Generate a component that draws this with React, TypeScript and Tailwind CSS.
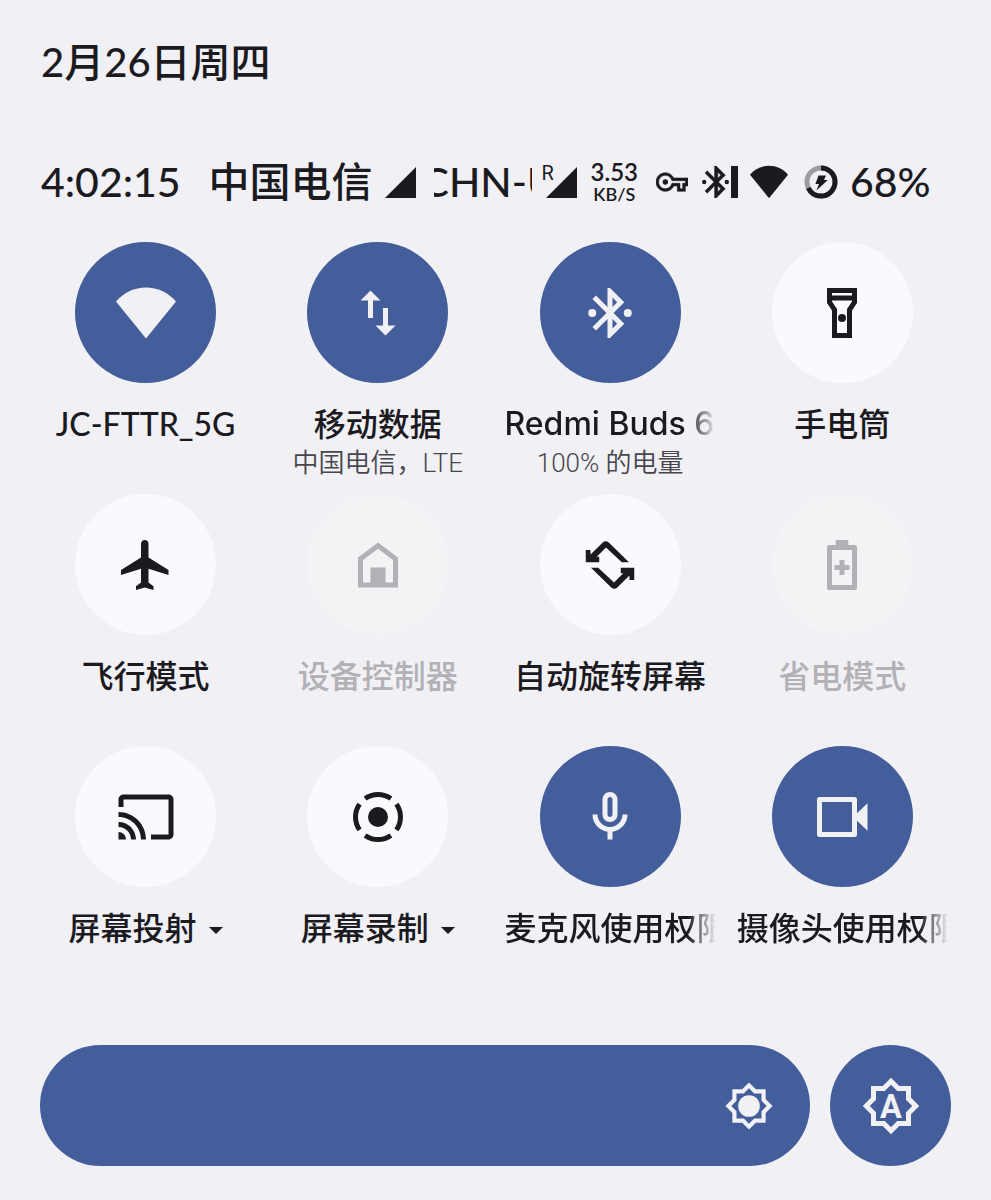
import type { ReactNode } from 'react';

function Icon({ className = 'size-[60px]', children }: { className?: string; children: ReactNode }) {
  return (
    <svg viewBox="0 0 24 24" fill="currentColor" fillRule="evenodd" aria-hidden="true" className={`shrink-0 ${className}`}>
      {children}
    </svg>
  );
}

const BLUETOOTH =
  'M17.71 7.71L12 2h-1v7.59L6.41 5 5 6.41 10.59 12 5 17.59 6.41 19 11 14.41V22h1l5.71-5.71-4.3-4.29zM13 5.83l1.88 1.88L13 9.59zM14.88 16.29L13 18.17v-3.76z';
const WIFI = 'M12 22.2L0 7.4C3.2 3.7 7.4 1.8 12 1.8S20.8 3.7 24 7.4z';
const STAR =
  'M20 8.69V4h-4.69L12 .69 8.69 4H4v4.69L.69 12 4 15.31V20h4.69L12 23.31 15.31 20H20v-4.69L23.31 12zM18 14.48V18h-3.52L12 20.48 9.52 18H6v-3.52L3.52 12 6 9.52V6h3.52L12 3.52 14.48 6H18v3.52L20.48 12z';
const ROTATE_ARROW = 'M2.3 6h1.9v1.8l4.9-4.8c.7-.7 1.7-.7 2.4 0l8.1 7.9h-2.9L10.4 5 6.7 8.7h1V10.9H2.3z';

type State = 'on' | 'off' | 'disabled';

interface Tile {
  label: string;
  sub?: string;
  state: State;
  icon: ReactNode;
  menu?: boolean;
  overflow?: boolean;
  font?: string;
}

const tiles: Tile[] = [
  { label: 'JC-FTTR_5G', state: 'on', icon: <path d={WIFI} /> },
  {
    label: '移动数据',
    sub: '中国电信，LTE',
    state: 'on',
    icon: <path d="M16 17v-7h-2v7h-3l4 4 4-4zM9 3L5 7h3v7h2V7h3z" />,
  },
  {
    label: 'Redmi Buds 6',
    sub: '100% 的电量',
    state: 'on',
    overflow: true,
    font: "font-['Inter',sans-serif]",
    icon: (
      <>
        <path d={BLUETOOTH} />
        <circle cx="4.9" cy="12" r="1.6" />
        <circle cx="19.1" cy="12" r="1.6" />
      </>
    ),
  },
  {
    label: '手电筒',
    state: 'off',
    icon: (
      <>
        <path d="M18 2H6v6l2 3v11h8V11l2-3zM16 4v1H8V4zM14 10.4V20h-4v-9.6l-2-3V7h8v.4z" />
        <circle cx="12" cy="14" r="1.6" />
      </>
    ),
  },
  {
    label: '飞行模式',
    state: 'off',
    icon: (
      <path d="M21 16v-2l-8-5V3.5c0-.83-.67-1.5-1.5-1.5S10 2.67 10 3.5V9l-8 5v2l8-2.5V19l-2 1.5V22l3.5-1 3.5 1v-1.5L13 19v-5.5z" />
    ),
  },
  {
    label: '设备控制器',
    state: 'disabled',
    icon: (
      <>
        <path d="M12 3L4 9v12h16V9zM18 19H6v-9l6-4.5 6 4.5z" />
        <path d="M9 13h6v7H9z" />
      </>
    ),
  },
  {
    label: '自动旋转屏幕',
    state: 'off',
    icon: (
      <>
        <path d={ROTATE_ARROW} />
        <path d={ROTATE_ARROW} transform="rotate(180 12 12)" />
      </>
    ),
  },
  {
    label: '省电模式',
    state: 'disabled',
    icon: (
      <>
        <path d="M17 4h-2.5V2h-5v2H7a1 1 0 0 0-1 1v16a1 1 0 0 0 1 1h10a1 1 0 0 0 1-1V5a1 1 0 0 0-1-1zM16 20H8V6h8z" />
        <path d="M11 10h2v2h2v2h-2v2h-2v-2H9v-2h2z" />
      </>
    ),
  },
  {
    label: '屏幕投射',
    state: 'off',
    menu: true,
    icon: (
      <path d="M21 3H3c-1.1 0-2 .9-2 2v3h2V5h18v14h-7v2h7c1.1 0 2-.9 2-2V5c0-1.1-.9-2-2-2zM1 18v3h3c0-1.66-1.34-3-3-3zm0-4v2c2.76 0 5 2.24 5 5h2c0-3.87-3.13-7-7-7zm0-4v2c4.97 0 9 4.03 9 9h2c0-6.08-4.93-11-11-11z" />
    ),
  },
  {
    label: '屏幕录制',
    state: 'off',
    menu: true,
    icon: (
      <>
        <circle cx="12" cy="12" r="4" />
        <path
          fill="none"
          stroke="currentColor"
          strokeWidth="2"
          d="M6.84 4.63a9 9 0 0 1 10.32 0M19.37 6.84a9 9 0 0 1 0 10.32M17.16 19.37a9 9 0 0 1-10.32 0M4.63 17.16a9 9 0 0 1 0-10.32"
        />
      </>
    ),
  },
  {
    label: '麦克风使用权限',
    state: 'on',
    overflow: true,
    icon: (
      <path d="M12 14c1.66 0 3-1.34 3-3V5c0-1.66-1.34-3-3-3S9 3.34 9 5v6c0 1.66 1.34 3 3 3zm-1-9c0-.55.45-1 1-1s1 .45 1 1v6c0 .55-.45 1-1 1s-1-.45-1-1zm6 6c0 2.76-2.24 5-5 5s-5-2.24-5-5H5c0 3.53 2.61 6.43 6 6.92V21h2v-3.08c3.39-.49 6-3.39 6-6.92z" />
    ),
  },
  {
    label: '摄像头使用权限',
    state: 'on',
    overflow: true,
    icon: (
      <>
        <path d="M17 4H3a1 1 0 0 0-1 1v14a1 1 0 0 0 1 1h14a1 1 0 0 0 1-1V5a1 1 0 0 0-1-1zM16 18H4V6h12z" />
        <path d="M17.9 10.6l4.3-4.1v11l-4.3-4.1z" />
      </>
    ),
  },
];

const circleStyle: Record<State, string> = {
  on: 'bg-[#435e9a] text-[#f1f0f5]',
  off: 'bg-[#faf9fe] text-[#1b1b1f]',
  disabled: 'bg-[#f3f2f5] text-[#b2b1b5]',
};

function TileButton({ tile }: { tile: Tile }) {
  return (
    <button
      type="button"
      aria-pressed={tile.state === 'on'}
      disabled={tile.state === 'disabled'}
      className="flex min-w-0 flex-col items-center"
    >
      <span className={`flex size-[141px] items-center justify-center rounded-full ${circleStyle[tile.state]}`}>
        <Icon>{tile.icon}</Icon>
      </span>
      <span
        className={`mt-[21px] flex w-full items-center overflow-hidden text-[32px] leading-10 font-medium whitespace-nowrap ${
          tile.overflow
            ? 'justify-start [mask-image:linear-gradient(to_right,black_calc(100%-28px),transparent)]'
            : 'justify-center'
        } ${tile.state === 'disabled' ? 'text-[#b2b1b5]' : 'text-[#1b1b1f]'} ${tile.font ?? ''}`}
      >
        {tile.label}
        {tile.menu && (
          <svg viewBox="0 0 14 7" fill="currentColor" aria-hidden="true" className="mt-1 ml-3 h-[7px] w-[14px] shrink-0">
            <path d="M0 0h14L7 7z" />
          </svg>
        )}
      </span>
      {tile.sub && (
        <span className="font-['Roboto','Noto_Sans_CJK_SC',sans-serif] text-[26px] leading-[38px] font-[350] whitespace-nowrap text-[#46464c]">
          {tile.sub}
        </span>
      )}
    </button>
  );
}

function Signal() {
  return (
    <svg viewBox="0 0 31 31" fill="currentColor" aria-hidden="true" className="size-[31px] shrink-0">
      <path d="M31 0v31H0z" />
    </svg>
  );
}

function StatusBar() {
  return (
    <div className="flex h-14 items-center text-[41px] leading-[56px] font-medium whitespace-nowrap">
      <time>4:02:15</time>
      <span className="ml-7">中国电信</span>
      <span className="ml-3">
        <Signal />
      </span>
      <span className="ml-[18px] flex w-[98px] overflow-hidden">
        <span className="-ml-3">CHN-U</span>
      </span>
      <span className="relative ml-[14px]">
        <Signal />
        <span className="absolute -top-1 -left-1 font-['Roboto'] text-xl leading-5 font-normal">R</span>
      </span>
      <span className="ml-[14px] flex flex-col items-center font-semibold">
        <span className="text-2xl leading-6">3.53</span>
        <span className="text-lg leading-5">KB/S</span>
      </span>
      <Icon className="ml-[18px] size-8">
        <path
          stroke="currentColor"
          strokeWidth=".4"
          d="M22 19h-6v-4h-2.68c-1.14 2.42-3.6 4-6.32 4-3.86 0-7-3.14-7-7s3.14-7 7-7c2.72 0 5.17 1.58 6.32 4H24v6h-2zM18 17h2v-4h2v-2H11.94l-.23-.67C11.01 8.34 9.11 7 7 7c-2.76 0-5 2.24-5 5s2.24 5 5 5c2.11 0 4.01-1.34 4.71-3.33l.23-.67H18z"
        />
        <circle cx="7" cy="12" r="2" />
      </Icon>
      <svg viewBox="0 0 36 32" fill="currentColor" fillRule="evenodd" aria-hidden="true" className="ml-[14px] h-8 w-9 shrink-0">
        <path d={BLUETOOTH} stroke="currentColor" strokeWidth=".3" transform="translate(-5 -3.2) scale(1.6)" />
        <circle cx="2.2" cy="16" r="2.2" />
        <circle cx="24.8" cy="16" r="2.2" />
        <path d="M29 0h7v32h-7z" />
      </svg>
      <Icon className="ml-3 size-[38px]">
        <path d={WIFI} />
      </Icon>
      <svg viewBox="0 0 34 34" aria-hidden="true" className="ml-4 size-[34px] shrink-0">
        <circle cx="17" cy="17" r="14" fill="none" stroke="#9c9b9f" strokeWidth="5" />
        <circle
          cx="17"
          cy="17"
          r="14"
          fill="none"
          stroke="#1b1b1f"
          strokeWidth="5"
          pathLength="100"
          strokeDasharray="68 32"
          transform="rotate(-90 17 17)"
        />
        <path d="M14.5 10.5h7.5l-2 4.5h3.8L12.4 25.5l2.6-6.5h-3.6z" fill="#1b1b1f" />
      </svg>
      <span className="ml-3">68%</span>
    </div>
  );
}

export default function App() {
  return (
    <main
      lang="zh-CN"
      className="min-h-screen bg-[#f1f0f5] pt-9 pb-[34px] font-['Lato','Noto_Sans_CJK_SC',sans-serif] text-[#1b1b1f]"
    >
      <header className="px-[41px]">
        <h1 className="text-[40px] leading-[52px] font-medium">2月26日周四</h1>
        <div className="mt-[66px]">
          <StatusBar />
        </div>
      </header>

      <section aria-label="快捷设置" className="mt-8 grid auto-rows-fr grid-cols-4 gap-x-[21px] gap-y-3 pr-[43px] pl-10">
        {tiles.map((tile) => (
          <TileButton key={tile.label} tile={tile} />
        ))}
      </section>

      <section aria-label="亮度" className="mt-[59px] flex items-center gap-5 px-10">
        <div className="relative h-[121px] flex-1">
          <input
            type="range"
            aria-label="屏幕亮度"
            min={0}
            max={100}
            defaultValue={100}
            className="block h-full w-full appearance-none rounded-full bg-[#435e9a] [&::-webkit-slider-thumb]:size-0 [&::-webkit-slider-thumb]:appearance-none"
          />
          <span className="pointer-events-none absolute inset-y-0 right-9 flex items-center text-[#f1f0f5]">
            <Icon className="size-[50px]">
              <path d={STAR} />
              <circle cx="12" cy="12" r="5.2" />
            </Icon>
          </span>
        </div>
        <button
          type="button"
          aria-label="自动调节亮度"
          className="flex size-[121px] shrink-0 items-center justify-center rounded-full bg-[#435e9a] text-[#f1f0f5]"
        >
          <Icon>
            <path d={STAR} />
            <text x="12" y="16.6" textAnchor="middle" fontSize="13" className="font-['Roboto'] font-bold">
              A
            </text>
          </Icon>
        </button>
      </section>
    </main>
  );
}
